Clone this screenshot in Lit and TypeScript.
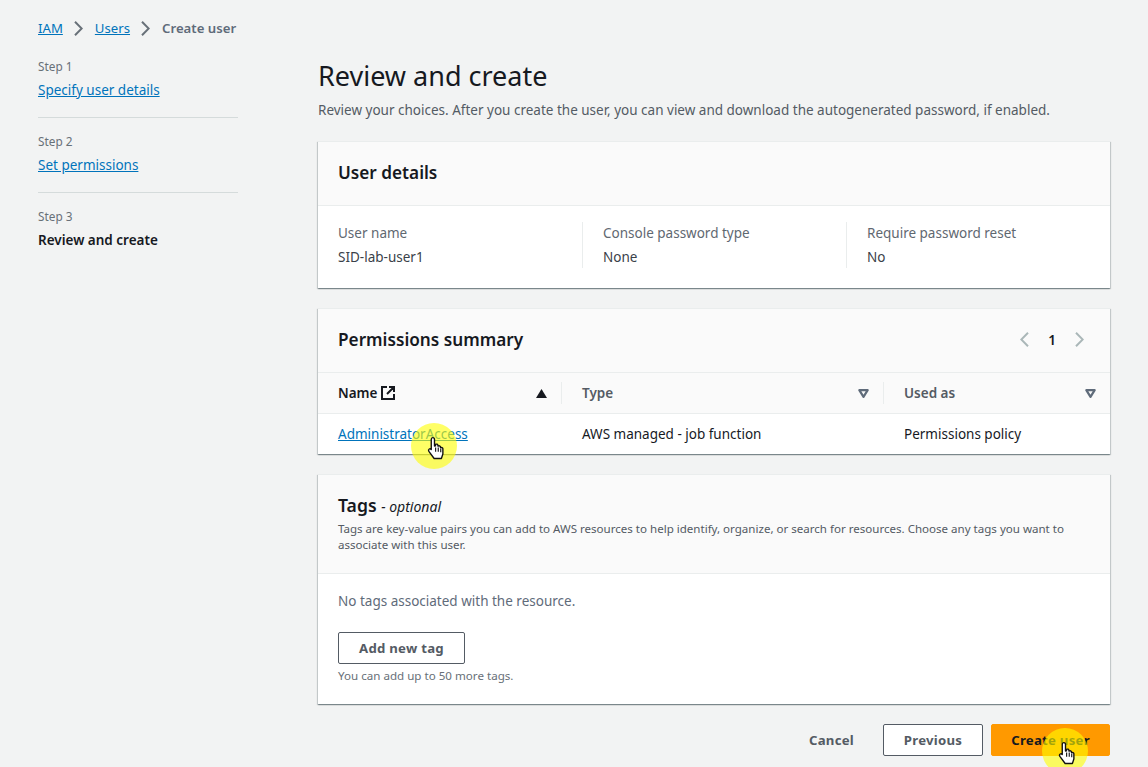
import { LitElement, html, css, svg } from "lit";
import { customElement } from "lit/decorators.js";

const chevron = (dir: "l" | "r", cls: string) => html`<svg class=${cls} viewBox="0 0 9 15" fill="none" stroke="currentColor" stroke-width="2"><path d=${dir === "r" ? "M1 .8l6.7 6.7L1 14.2" : "M8 .8L1.3 7.5 8 14.2"}></path></svg>`;
const hand = svg`<path d="M6.2 1.2c.9 0 1.4.6 1.4 1.5v5.2l.8-.1V6.6c1-.5 1.7-.2 1.9.6l.1.8c.9-.5 1.7-.3 1.9.5l.1.7c1-.3 1.7 0 1.9.8v4.3l-1.2 3.6H7.3L3.1 12.2c-.5-.8-.3-1.5.3-1.9.6-.3 1.2-.1 1.6.4v-8c0-.9.4-1.5 1.2-1.5z" fill="#fff" stroke="#111" stroke-width="1.1" stroke-linejoin="round"/><path d="M8.5 9v3.5M10.6 9v3.5M12.6 9.8v3" stroke="#111" stroke-width=".9"/>`;
const filterIcon = html`<svg class="sort" viewBox="0 0 10 8"><path d="M1.2 1h7.6L5 7z" fill="none" stroke="#5f6b7a" stroke-width="2" stroke-linejoin="round"></path></svg>`;

@customElement("app-root")
export class AppRoot extends LitElement {
  static styles = css`
    :host { display: block; height: 767px; overflow: hidden; position: relative; background: #f2f3f3; color: #16191f; font-family: "Noto Sans", "Open Sans", sans-serif; font-size: 13.5px; line-height: 18px; }
    a { color: #0073bb; text-decoration: underline; }
    .crumbs { display: flex; align-items: center; height: 18px; padding: 19px 0 0 38px; font-size: 13.2px; }
    .crumbs .sep { width: 9px; height: 15px; margin: 0 12px 0 11px; color: #687078; flex: none; }
    .crumbs b { color: #5f6b7a; font-weight: 600; }
    .page { display: flex; padding: 0 38px; }
    .side { width: 200px; margin-right: 80px; padding-top: 20px; flex: none; }
    .step { padding-bottom: 18px; }
    .step + .step { border-top: 1px solid #d5dbdb; padding-top: 14px; }
    .step small { display: block; font-size: 11.8px; color: #687078; height: 18px; line-height: 18px; margin-bottom: 6px; }
    .step a, .step strong { display: block; width: fit-content; font-weight: 400; }
    .step strong { font-weight: 600; color: #16191f; }
    .main { flex: 1; min-width: 0; }
    h1 { margin: 0; font-size: 27px; line-height: 34px; font-weight: 400; padding-top: 22px; color: #16191f; }
    .lead { margin: 8px 0 22px; color: #545b64; line-height: 18px; }
    .card { background: #fff; box-shadow: 0 1px 1px 0 rgba(0,28,36,.3), 1px 1px 1px 0 rgba(0,28,36,.15), -1px 1px 1px 0 rgba(0,28,36,.15); border-top: 1px solid #eaeded; margin-bottom: 20px; }
    .head { background: #fafafa; border-bottom: 1px solid #eaeded; padding: 0 20px; }
    h2 { margin: 0; font-size: 17.2px; line-height: 22px; font-weight: 600; color: #16191f; }
    .head1 { height: 61px; padding-bottom: 2px; display: flex; align-items: center; }
    .cols { display: grid; grid-template-columns: 244px 264px 1fr; height: 82px; padding: 16px 20px 0; box-sizing: border-box; }
    .col { height: 46px; border-left: 1px solid #eaeded; padding-left: 20px; }
    .col:first-child { border-left: 0; padding-left: 0; }
    .col .k { color: #5f6871; line-height: 22px; height: 22px; }
    .col .v { color: #3a4149; margin-top: 4px; }
    .pager { display: flex; align-items: center; margin-left: auto; color: #16191f; font-weight: 600; }
    .pager svg { width: 9px; height: 15px; color: #aab7b8; }
    .pager span { margin: 0 19px; }
    .head2 { height: 61px; padding-bottom: 2px; display: flex; align-items: center; padding-right: 26px; background: #fafafa; }
    .thead { display: grid; grid-template-columns: 243px 322px 1fr; height: 40px; background: #fafafa; border-bottom: 1px solid #eaeded; font-weight: 600; color: #545b64; }
    .th { display: flex; align-items: center; padding-left: 21px; padding-right: 14px; position: relative; }
    .th:first-child { padding-left: 20px; }
    .th + .th::before { content: ""; position: absolute; left: 0; top: 9px; height: 22px; width: 1px; background: #eaeded; }
    .th.name { color: #16191f; }
    .th svg.ext { width: 14px; height: 14px; margin-left: 4px; }
    .th .sort { width: 11px; height: 9px; margin-left: auto; }
    .tr { display: grid; grid-template-columns: 243px 322px 1fr; height: 40px; align-items: center; color: #16191f; }
    .tr > * { padding-left: 21px; }
    .tr > :first-child { padding-left: 20px; }
    .tags-h { height: 79px; padding-top: 19px; background: #fafafa; border-bottom: 1px solid #eaeded; }
    .tags-h h2 { font-size: 17.6px; line-height: 22px; }
    .tags-h h2 i { font-size: 14px; font-weight: 400; }
    .tags-h p { margin: 3px 20px 0 0; font-size: 11.55px; line-height: 16px; color: #545b64; }
    .tags-b { padding: 18px 20px 0; height: 112px; }
    .tags-b .empty { color: #5f6b7a; height: 18px; margin-bottom: 22px; }
    .btn { display: inline-flex; align-items: center; justify-content: center; box-sizing: border-box; height: 32px; border: 1px solid #545b64; border-radius: 2px; background: #fff; color: #545b64; font-weight: 700; font-size: 13.2px; font-family: inherit; letter-spacing: .25px; }
    .add { width: 127px; }
    .hint { font-size: 11.6px; line-height: 16px; color: #687078; margin-top: 4px; }
    .foot { display: flex; justify-content: flex-end; align-items: center; }
    .cancel { color: #545b64; font-weight: 700; font-size: 13.2px; letter-spacing: .25px; margin-right: 29px; }
    .prev { width: 100px; margin-right: 8px; }
    .go { width: 119px; background: #ff9900; border-color: #ff9900; color: #16191f; }
    .halo { position: absolute; width: 46px; height: 46px; border-radius: 50%; background: rgba(255,255,0,.6); pointer-events: none; }
    .halo svg { position: absolute; left: 14px; top: 13px; width: 20px; height: 24px; }
    .h1 { left: 411px; top: 423px; }
    .h2 { left: 1042px; top: 728px; }
  `;

  render() {
    return html`
      <div class="crumbs">
        <a>IAM</a>${chevron("r", "sep")}<a>Users</a>${chevron("r", "sep")}<b>Create user</b>
      </div>
      <div class="page">
        <nav class="side">
          <div class="step"><small>Step 1</small><a>Specify user details</a></div>
          <div class="step"><small>Step 2</small><a>Set permissions</a></div>
          <div class="step"><small>Step 3</small><strong>Review and create</strong></div>
        </nav>
        <main class="main">
          <h1>Review and create</h1>
          <p class="lead">Review your choices. After you create the user, you can view and download the autogenerated password, if enabled.</p>

          <section class="card">
            <div class="head head1"><h2>User details</h2></div>
            <div class="cols">
              <div class="col"><div class="k">User name</div><div class="v">SID-lab-user1</div></div>
              <div class="col"><div class="k">Console password type</div><div class="v">None</div></div>
              <div class="col"><div class="k">Require password reset</div><div class="v">No</div></div>
            </div>
          </section>

          <section class="card">
            <div class="head head2"><h2>Permissions summary</h2>
              <div class="pager">${chevron("l", "")}<span>1</span>${chevron("r", "")}</div>
            </div>
            <div class="thead">
              <div class="th name">Name
                <svg class="ext" viewBox="0 0 14 14" fill="none" stroke="#16191f" stroke-width="2"><path d="M6 1H1v12h12V8M8 1h5v5M13 1L6 8"></path></svg>
                <svg class="sort" viewBox="0 0 10 8"><path d="M5 0l5 8H0z" fill="#16191f"></path></svg>
              </div>
              <div class="th">Type ${filterIcon}</div>
              <div class="th">Used as ${filterIcon}</div>
            </div>
            <div class="tr"><div><a>AdministratorAccess</a></div><div>AWS managed - job function</div><div>Permissions policy</div></div>
          </section>

          <section class="card">
            <div class="head tags-h">
              <h2>Tags <i>- optional</i></h2>
              <p>Tags are key-value pairs you can add to AWS resources to help identify, organize, or search for resources. Choose any tags you want to associate with this user.</p>
            </div>
            <div class="tags-b">
              <div class="empty">No tags associated with the resource.</div>
              <button class="btn add">Add new tag</button>
              <div class="hint">You can add up to 50 more tags.</div>
            </div>
          </section>

          <div class="foot">
            <span class="cancel">Cancel</span>
            <button class="btn prev">Previous</button>
            <button class="btn go">Create user</button>
          </div>
        </main>
      </div>
      <div class="halo h1"><svg viewBox="0 0 16 19">${hand}</svg></div>
      <div class="halo h2"><svg viewBox="0 0 16 19">${hand}</svg></div>
    `;
  }
}
